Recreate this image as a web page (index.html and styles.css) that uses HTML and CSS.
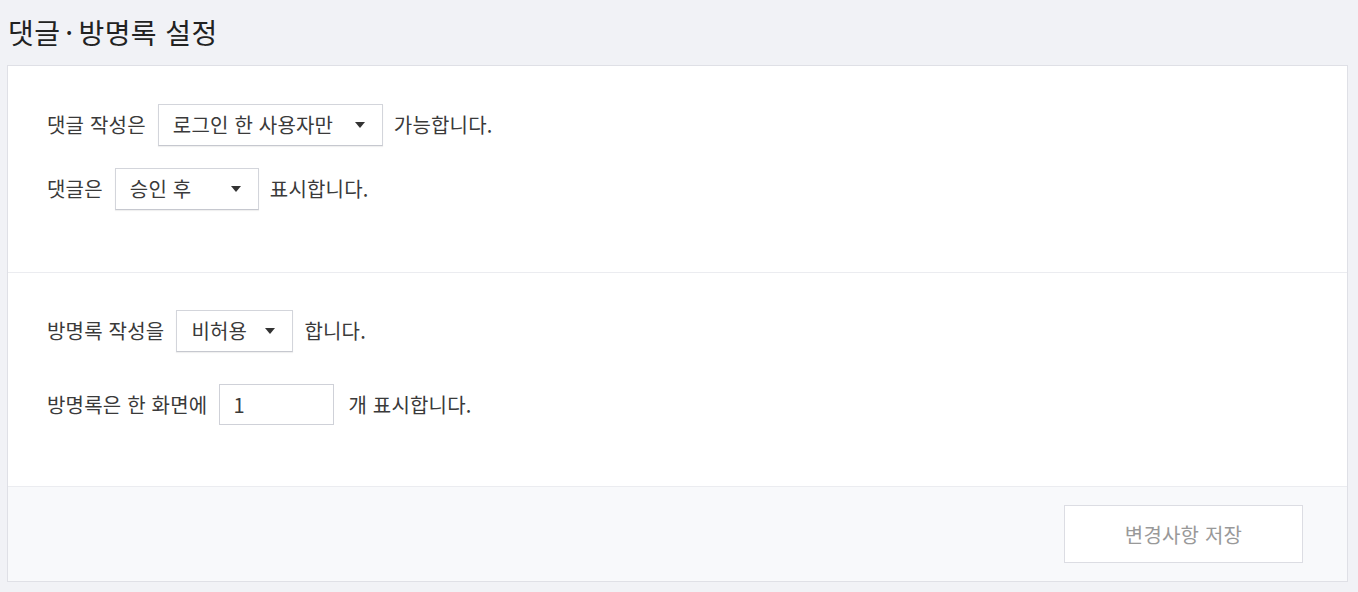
FILE: index.html
```html
<!DOCTYPE html>
<html lang="ko">
<head>
<meta charset="utf-8">
<title>댓글·방명록 설정</title>
<link rel="stylesheet" href="styles.css">
</head>
<body>
<header class="page-head">
  <h1 class="page-title">댓글<span class="dot">·</span>방명록 설정</h1>
</header>
<div class="panel">
  <section class="section section-comment">
    <div class="row">
      <span class="label">댓글 작성은</span>
      <div class="select select-wide"><span class="select-text">로그인 한 사용자만</span><span class="caret"></span></div>
      <span class="label">가능합니다.</span>
    </div>
    <div class="row row-next">
      <span class="label">댓글은</span>
      <div class="select select-mid"><span class="select-text">승인 후</span><span class="caret"></span></div>
      <span class="label">표시합니다.</span>
    </div>
  </section>
  <section class="section section-guest">
    <div class="row">
      <span class="label">방명록 작성을</span>
      <div class="select select-small"><span class="select-text">비허용</span><span class="caret"></span></div>
      <span class="label">합니다.</span>
    </div>
    <div class="row row-input">
      <span class="label">방명록은 한 화면에</span>
      <div class="text-input">1</div>
      <span class="label label-after-input">개 표시합니다.</span>
    </div>
  </section>
  <footer class="panel-foot">
    <button class="save-btn" type="button">변경사항 저장</button>
  </footer>
</div>
</body>
</html>
```
FILE: styles.css
```css
html, body {
  margin: 0;
  padding: 0;
}
body {
  background: #f1f2f6;
  font-family: "Noto Sans CJK KR", "Noto Sans", sans-serif;
  color: #3a3a3a;
  width: 1358px;
  height: 592px;
  overflow: hidden;
}
.page-head {
  height: 65px;
  display: flex;
  align-items: center;
  padding-left: 8px;
}
.page-title {
  margin: 0;
  font-size: 28px;
  font-weight: 400;
  color: #222;
  line-height: 1;
  letter-spacing: 0.4px;
  padding-bottom: 2px;
}
.dot {
  margin: 0 5px;
}
.panel {
  margin: 0 10px 0 7px;
  background: #fff;
  border: 1px solid #dfe0e6;
}
.section {
  padding-left: 39px;
  border-bottom: 1px solid #ebecf0;
}
.section-comment {
  padding-top: 38px;
  padding-bottom: 62px;
}
.section-guest {
  padding-top: 37px;
  padding-bottom: 61px;
}
.row {
  display: flex;
  align-items: center;
  height: 42px;
}
.row-next {
  margin-top: 22px;
}
.row-input {
  margin-top: 32px;
  height: 41px;
}
.label,
.select-text,
.text-input,
.save-btn {
  font-size: 20px;
  letter-spacing: 0.2px;
}
.label {
  line-height: 1;
  color: #3a3a3a;
}
.select {
  box-sizing: border-box;
  height: 42px;
  margin: 0 11px 0 12px;
  border: 1px solid #d3d5db;
  border-bottom-color: #c6c8cf;
  box-shadow: 0 1px 1px rgba(0, 0, 0, 0.06);
  background: #fff;
  display: flex;
  align-items: center;
  justify-content: space-between;
  padding: 0 17px 0 14px;
}
.select-wide { width: 225px; }
.select-mid { width: 144px; }
.select-small { width: 117px; }
.select-text {
  line-height: 1;
  color: #3a3a3a;
}
.caret {
  width: 0;
  height: 0;
  border-left: 5px solid transparent;
  border-right: 5px solid transparent;
  border-top: 6px solid #333;
}
.text-input {
  box-sizing: border-box;
  width: 115px;
  height: 41px;
  margin-left: 12px;
  border: 1px solid #cfd1d8;
  background: #fff;
  display: flex;
  align-items: center;
  padding-left: 13px;
  color: #3a3a3a;
}
.label-after-input {
  margin-left: 14px;
}
.panel-foot {
  background: #f8f9fb;
  display: flex;
  justify-content: flex-end;
  padding: 18px 44px 18px 0;
}
.save-btn {
  width: 239px;
  height: 58px;
  background: #fff;
  border: 1px solid #dcdde3;
  font-family: "Noto Sans CJK KR", "Noto Sans", sans-serif;
  color: #999;
  padding: 0;
  cursor: default;
}
```
